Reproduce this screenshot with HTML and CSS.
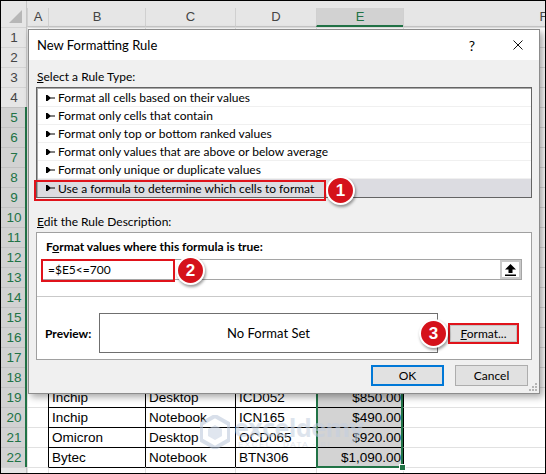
FILE: index.html
```html
<!DOCTYPE html>
<html lang="en">
<head>
	<meta charset="UTF-8">
	<title>New Formatting Rule</title>
	<link rel="stylesheet" href="styles.css">
	<script>
		let rows={
			19:['Inchip','Desktop','ICD052','$850.00'],
			20:['Inchip','Notebook','ICN165','$490.00'],
			21:['Omicron','Desktop','OCD065','$920.00'],
			22:['Bytec','Notebook','BTN306','$1,090.00']
		};

		function createCell(cls, text){
			let cell=document.createElement('div');
			cell.className=cls;
			if(text) cell.append(text);
			return cell;
		}

		document.addEventListener('DOMContentLoaded', ()=>{
			let sheet=document.querySelector('.sheet');
			let cols=['A','B','C','D','E','F'];

			let corner=createCell('sheet__corner');
			corner.innerHTML='<svg width="13" height="13" viewBox="0 0 13 13"><polygon points="13,0 13,13 0,13" fill="#b7b7b7"/></svg>';
			sheet.append(corner);

			cols.forEach(c=>{
				let head=createCell('sheet__col-head');
				let label=createCell(c==='E'?'col-label col-label--sel':'col-label', c);
				head.append(label);
				sheet.append(head);
			});

			// row 23 only peeks in at the bottom edge, its number is out of view
			for(let r=1;r<=23;r++){
				let selected=r>=5&&r<=22;
				sheet.append(createCell(selected?'sheet__row-head sheet__row-head--sel':'sheet__row-head', r<23?String(r):''));
				cols.forEach((c,i)=>{
					let cls='sheet__cell';
					let text='';
					if(rows[r]&&i>=1&&i<=4){
						cls+=' sheet__cell--table';
						text=rows[r][i-1];
					}
					if(r===23&&i>=1&&i<=4) cls+=' sheet__cell--under';
					if(rows[r]&&i===5) cls+=' sheet__cell--right';
					if(c==='E'&&selected) cls+=' sheet__cell--sel';
					if(c==='E') cls+=' sheet__cell--num';
					sheet.append(createCell(cls, text));
				});
			}
		});
	</script>
</head>
<body>
	<div class="screen">
		<div class="sheet"></div>

		<div class="selection"><span class="selection__handle"></span></div>

		<div class="watermark">
			<svg class="watermark__logo" width="30" height="34" viewBox="0 0 30 34">
				<polygon points="15,1 29,9 29,25 15,33 1,25 1,9" fill="none" stroke="#b9c6da" stroke-width="4"/>
				<polygon points="15,10 22,14 22,21 15,25 8,21 8,14" fill="#c7d2e3"/>
			</svg>
			<div class="watermark__text">
				<div class="watermark__name">exceldemy</div>
				<div class="watermark__tag">EXCEL · DATA · BI</div>
			</div>
		</div>

		<div class="dialog">
			<div class="dialog__title">
				<span class="dialog__caption">New Formatting Rule</span>
				<span class="dialog__help">?</span>
				<svg class="dialog__close" width="10" height="10" viewBox="0 0 10 10">
					<path d="M0.5 0.5 L9.5 9.5 M9.5 0.5 L0.5 9.5" stroke="#111" stroke-width="1"/>
				</svg>
			</div>
			<div class="dialog__body">
				<div class="dialog__label"><u>S</u>elect a Rule Type:</div>
				<div class="rule-list">
					<div class="rule-list__item"><svg class="arrow" width="9" height="6" viewBox="0 0 9 6"><polygon points="0,0 1.5,0 4.5,2.5 9,2.5 9,3.5 4.5,3.5 1.5,6 0,6" fill="#000"/></svg>Format all cells based on their values</div>
					<div class="rule-list__item"><svg class="arrow" width="9" height="6" viewBox="0 0 9 6"><polygon points="0,0 1.5,0 4.5,2.5 9,2.5 9,3.5 4.5,3.5 1.5,6 0,6" fill="#000"/></svg>Format only cells that contain</div>
					<div class="rule-list__item"><svg class="arrow" width="9" height="6" viewBox="0 0 9 6"><polygon points="0,0 1.5,0 4.5,2.5 9,2.5 9,3.5 4.5,3.5 1.5,6 0,6" fill="#000"/></svg>Format only top or bottom ranked values</div>
					<div class="rule-list__item"><svg class="arrow" width="9" height="6" viewBox="0 0 9 6"><polygon points="0,0 1.5,0 4.5,2.5 9,2.5 9,3.5 4.5,3.5 1.5,6 0,6" fill="#000"/></svg>Format only values that are above or below average</div>
					<div class="rule-list__item"><svg class="arrow" width="9" height="6" viewBox="0 0 9 6"><polygon points="0,0 1.5,0 4.5,2.5 9,2.5 9,3.5 4.5,3.5 1.5,6 0,6" fill="#000"/></svg>Format only unique or duplicate values</div>
					<div class="rule-list__item active"><svg class="arrow" width="9" height="6" viewBox="0 0 9 6"><polygon points="0,0 1.5,0 4.5,2.5 9,2.5 9,3.5 4.5,3.5 1.5,6 0,6" fill="#000"/></svg>Use a formula to determine which cells to format</div>
				</div>

				<div class="dialog__label dialog__label--gap"><u>E</u>dit the Rule Description:</div>
				<div class="desc">
					<div class="desc__top">
						<div class="desc__heading">F<u>o</u>rmat values where this formula is true:</div>
						<div class="formula">
							<span class="formula__text">=$E5&lt;=700</span>
							<span class="formula__btn">
								<svg width="11" height="12" viewBox="0 0 11 12">
									<polygon points="5.5,0 11,5.5 7.5,5.5 7.5,9 3.5,9 3.5,5.5 0,5.5" fill="#000"/>
									<rect x="0" y="10.5" width="11" height="1.5" fill="#000"/>
								</svg>
							</span>
						</div>
					</div>
					<div class="desc__preview">
						<span class="preview__label">Preview:</span>
						<div class="preview__box">No Format Set</div>
						<button class="btn btn--format"><u>F</u>ormat...</button>
					</div>
				</div>

				<div class="dialog__buttons">
					<button class="btn btn--ok">OK</button>
					<button class="btn">Cancel</button>
				</div>
			</div>
			<svg class="dialog__grip" width="9" height="9" viewBox="0 0 9 9">
				<rect x="7" y="1" width="2" height="2" fill="#b5b5b5"/>
				<rect x="4" y="4" width="2" height="2" fill="#b5b5b5"/>
				<rect x="7" y="4" width="2" height="2" fill="#b5b5b5"/>
				<rect x="1" y="7" width="2" height="2" fill="#b5b5b5"/>
				<rect x="4" y="7" width="2" height="2" fill="#b5b5b5"/>
				<rect x="7" y="7" width="2" height="2" fill="#b5b5b5"/>
			</svg>
		</div>

		<div class="mark mark--rule"></div>
		<div class="mark mark--formula"></div>
		<div class="step step--1">1</div>
		<div class="step step--2">2</div>
		<div class="step step--3">3</div>
	</div>
</body>
</html>
```
FILE: styles.css
```css
*{
	margin: 0;
	padding: 0;
	box-sizing: border-box;
}
body{
	background-color: #fff;
	font-family: "Liberation Sans", Arial, sans-serif;
}

.screen{
	position: relative;
	width: 546px;
	height: 474px;
	border: 1px solid #000;
	overflow: hidden;
	background-color: #fff;
}

/* spreadsheet */
.sheet{
	display: grid;
	grid-template-columns: 26px 21px 97px 90px 81px 87px 280px;
	grid-template-rows: 26px repeat(23, 20px);
	font-size: 13.5px;
	color: #000;
}
.sheet__corner{
	display: flex;
	align-items: flex-end;
	justify-content: flex-end;
	padding: 0 4px 4px 0;
	background-color: #e6e6e6;
	border-right: 1px solid #c6c6c6;
}
.sheet__col-head{
	display: flex;
	align-items: flex-end;
	background-color: #e6e6e6;
}
.col-label{
	flex: 1;
	height: 19px;
	line-height: 18px;
	text-align: center;
	font-size: 13px;
	color: #444;
	border-left: 1px solid #d0d0d0;
	border-bottom: 1px solid #c6c6c6;
}
.col-label--sel{
	background-color: #d2d2d2;
	color: #217346;
	border-bottom: 2px solid #217346;
}
.sheet__row-head{
	background-color: #e6e6e6;
	box-shadow: inset -1px 0 0 #c6c6c6, inset 0 1px 0 #d4d4d4;
	text-align: center;
	line-height: 21px;
	font-size: 13.5px;
	color: #444;
}
.sheet__row-head--sel{
	background-color: #d2d2d2;
	color: #217346;
	box-shadow: inset -2px 0 0 #217346, inset 0 1px 0 #c2c2c2;
}
.sheet__cell{
	border-left: 1px solid #e1e1e1;
	border-top: 1px solid #e1e1e1;
	padding: 0 3px;
	line-height: 19px;
	white-space: nowrap;
	overflow: hidden;
}
.sheet__cell--table{
	border-left-color: #000;
	border-top-color: #000;
}
.sheet__cell--under{
	border-top-color: #000;
}
.sheet__cell--right{
	border-left-color: #000;
}
.sheet__cell--sel{
	background-color: #d3d3d3;
}
.sheet__cell--num{
	text-align: right;
	padding-right: 2px;
}

.selection{
	position: absolute;
	left: 315px;
	top: 106px;
	width: 87px;
	height: 361px;
	border: 2px solid #217346;
}
.selection__handle{
	position: absolute;
	right: -5px;
	bottom: -5px;
	width: 7px;
	height: 7px;
	background-color: #217346;
	border: 1px solid #fff;
}

.watermark{
	position: absolute;
	left: 199px;
	top: 413px;
	display: flex;
	align-items: center;
	gap: 4px;
	opacity: 0.55;
	pointer-events: none;
}
.watermark__name{
	font-family: "Open Sans", sans-serif;
	font-weight: 700;
	font-size: 25px;
	line-height: 26px;
	color: #c3cfe0;
	letter-spacing: -0.5px;
}
.watermark__tag{
	font-size: 8px;
	letter-spacing: 1.5px;
	color: #c9d1dd;
	padding-left: 4px;
}

/* dialog */
.dialog{
	position: absolute;
	left: 27px;
	top: 28px;
	width: 512px;
	height: 365px;
	border: 1px solid #8c8c8c;
	background-color: #f0f0f0;
	box-shadow: 3px 3px 7px rgba(0, 0, 0, 0.35);
	font-family: "Lato", "Liberation Sans", sans-serif;
	font-size: 12px;
	color: #000;
}
.dialog__title{
	display: flex;
	align-items: center;
	height: 30px;
	padding: 0 16px 0 8px;
	background-color: #fff;
}
.dialog__caption{
	font-size: 13px;
}
.dialog__help{
	margin-left: auto;
	margin-right: 38px;
	font-size: 14px;
}
.dialog__body{
	padding: 9px 7px 0 7px;
}
.dialog__label{
	line-height: 16px;
	padding-left: 1px;
}
.dialog__label--gap{
	margin-top: 16px;
}

.rule-list{
	margin-top: 2px;
	height: 111px;
	padding-top: 1px;
	background-color: #fff;
	border: 1px solid #646464;
	box-shadow: inset 1px 1px 0 #a8a8a8;
}
.rule-list__item{
	display: flex;
	align-items: center;
	height: 18px;
	padding-left: 8px;
	border-bottom: 1px solid #f0f0f0;
	margin-left: 1px;
}
.rule-list__item.active{
	background-color: #dcdce1;
	border-bottom: none;
}
.arrow{
	margin-right: 3px;
	flex-shrink: 0;
}

.desc{
	margin-top: 2px;
	height: 128px;
	background-color: #fff;
	border: 1px solid #a0a0a0;
}
.desc__top{
	padding: 6px 9px 16px 5px;
	border-bottom: 1px solid #c9c9c9;
}
.desc__heading{
	font-weight: 700;
	line-height: 16px;
	padding-left: 4px;
}
.formula{
	display: flex;
	align-items: center;
	justify-content: space-between;
	margin-top: 4px;
	height: 21px;
	border: 1px solid #a5a5a5;
	background-color: #fff;
}
.formula__text{
	padding-left: 5px;
}
.formula__btn{
	display: flex;
	align-items: center;
	justify-content: center;
	width: 21px;
	height: 19px;
	background-color: #fff;
	border: 2px solid #c9c9c9;
}
.desc__preview{
	display: flex;
	align-items: center;
	padding: 16px 11px 6px 8px;
}
.preview__label{
	width: 54px;
	font-weight: 700;
}
.preview__box{
	width: 339px;
	height: 40px;
	line-height: 38px;
	text-align: center;
	font-size: 13px;
	border: 1px solid #6f6f6f;
}

.btn{
	width: 73px;
	height: 21px;
	font-family: inherit;
	font-size: 12px;
	color: #000;
	background-color: #e1e1e1;
	border: 1px solid #adadad;
}
.btn--format{
	width: 71px;
	margin-left: 10px;
	border: 2px solid #e0131b;
	box-shadow: inset 0 0 0 1px #c4c4c4;
}
.btn--ok{
	border: 2px solid #0078d7;
}
.dialog__buttons{
	display: flex;
	justify-content: flex-end;
	gap: 11px;
	margin-top: 5px;
	padding-right: 4px;
}
.dialog__grip{
	position: absolute;
	right: 2px;
	bottom: 2px;
}

/* annotations */
.mark{
	position: absolute;
	border: 2px solid #e0131b;
}
.mark--rule{
	left: 33px;
	top: 179px;
	width: 292px;
	height: 21px;
}
.mark--formula{
	left: 40px;
	top: 258px;
	width: 134px;
	height: 23px;
}
.step{
	position: absolute;
	width: 29px;
	height: 29px;
	border-radius: 50%;
	background-color: #d5121b;
	border: 2px solid #fff;
	box-shadow: 1px 2px 3px rgba(0, 0, 0, 0.4);
	color: #fff;
	font-family: "Liberation Sans", Arial, sans-serif;
	font-weight: 700;
	font-size: 17px;
	line-height: 25px;
	text-align: center;
}
.step--1{
	left: 325px;
	top: 175px;
}
.step--2{
	left: 175px;
	top: 255px;
}
.step--3{
	left: 418px;
	top: 318px;
}
```
